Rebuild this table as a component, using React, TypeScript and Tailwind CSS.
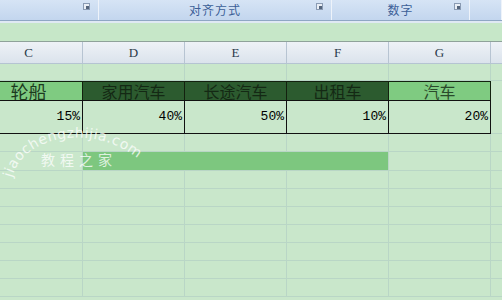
import React from 'react';

const cols = [108, 102, 102, 102, 102, 60];
const letters = ['C', 'D', 'E', 'F', 'G', ''];

const Launcher: React.FC = () => (
  <div className="w-[7px] h-[7px] border border-[#8a9bb3] bg-[#e9eef5] flex items-end justify-end">
    <div className="w-[3px] h-[3px] bg-[#55657c]" />
  </div>
);

const RibbonGroup: React.FC<{ w: string; label?: string; launcher?: boolean }> = ({ w, label, launcher }) => (
  <div className={`${w} h-full relative flex items-center justify-center border-r border-[#eef3fa] bg-gradient-to-b from-[#d6e4f5] to-[#c3d6ee]`}>
    {label && <span className="text-[12px] leading-none text-[#3c5f97] tracking-[1px]">{label}</span>}
    {launcher && (
      <div className="absolute right-[8px] top-[3px]">
        <Launcher />
      </div>
    )}
  </div>
);

const GridRow: React.FC<{ h: string; bar?: boolean }> = ({ h, bar }) => (
  <div className={`flex ${h} border-b border-[#b9d6c6]`}>
    {cols.map((w, i) => {
      const inBar = bar && i >= 1 && i <= 3;
      return (
        <div
          key={i}
          style={{ width: w }}
          className={`shrink-0 border-r ${inBar ? 'bg-[#7dc77f] border-[#7dc77f]' : 'border-[#b9d6c6]'} ${bar && i === 3 ? 'border-r-[#b9d6c6]' : ''}`}
        />
      );
    })}
  </div>
);

const App: React.FC = () => {
  const heads = [
    { t: '轮船', cls: 'bg-[#7fcb81] text-[#1c3a1e] text-[18px]' },
    { t: '家用汽车', cls: 'bg-[#2c5b2f] text-[#142914] text-[16px]' },
    { t: '长途汽车', cls: 'bg-[#2c5b2f] text-[#142914] text-[16px]' },
    { t: '出租车', cls: 'bg-[#2c5b2f] text-[#142914] text-[16px]' },
    { t: '汽车', cls: 'bg-[#7fcb81] text-[#2a4a2b] text-[16px]' },
  ];
  const vals = ['15%', '40%', '50%', '10%', '20%'];

  return (
    <div
      className="w-[502px] h-[300px] overflow-hidden relative bg-[#c9e7cb]"
      style={{ fontFamily: '"Noto Sans CJK SC", sans-serif' }}
    >
      {/* ribbon group labels */}
      <div className="flex h-[20px]">
        <RibbonGroup w="w-[99px]" launcher />
        <RibbonGroup w="w-[233px]" label="对齐方式" launcher />
        <RibbonGroup w="w-[138px]" label="数字" launcher />
        <RibbonGroup w="flex-1" />
      </div>
      <div className="h-[1px] bg-[#8ea7c4]" />
      <div className="h-[2px] bg-[#dfe9f3]" />
      {/* formula area */}
      <div className="h-[19px] bg-[#c6e7c8] border-b border-[#8fa29a]" />

      <div className="-ml-[25px]">
        {/* column header */}
        <div className="flex h-[22px] bg-gradient-to-b from-[#eef2f7] to-[#dbe3ec] border-b border-[#b5c4d2]">
          {cols.map((w, i) => (
            <div
              key={i}
              style={{ width: w, fontFamily: '"Liberation Serif", serif' }}
              className="shrink-0 border-r border-[#b7c4d2] flex items-center justify-center text-[13px] text-[#2a3a4a]"
            >
              {letters[i]}
            </div>
          ))}
        </div>

        <GridRow h="h-[17px]" />

        {/* table header */}
        <div className="flex h-[19px]">
          {heads.map((c, i) => (
            <div
              key={i}
              style={{ width: cols[i] }}
              className={`shrink-0 border-r border-t border-[#13210f] flex items-center justify-center leading-none ${c.cls}`}
            >
              {c.t}
            </div>
          ))}
          <div style={{ width: cols[5] }} className="shrink-0 border-r border-[#b9d6c6]" />
        </div>

        {/* data */}
        <div className="flex h-[34px]">
          {vals.map((v, i) => (
            <div
              key={i}
              style={{ width: cols[i], fontFamily: '"Liberation Mono", monospace' }}
              className="shrink-0 border-r border-b border-t border-[#111] flex items-center justify-end pr-[2px] text-[13px] text-black"
            >
              {v}
            </div>
          ))}
          <div style={{ width: cols[5] }} className="shrink-0 border-r border-b border-[#b9d6c6]" />
        </div>

        <GridRow h="h-[18px]" />
        <GridRow h="h-[19px]" bar />
        <GridRow h="h-[18px]" />
        <GridRow h="h-[18px]" />
        <GridRow h="h-[18px]" />
        <GridRow h="h-[18px]" />
        <GridRow h="h-[18px]" />
        <GridRow h="h-[18px]" />
        <GridRow h="h-[18px]" />
      </div>

      {/* watermark */}
      <svg className="absolute left-0 top-[114px]" width="180" height="84" viewBox="0 0 180 84">
        <defs>
          <path id="arc" d="M 12 64 C 24 14, 120 4, 160 70" />
        </defs>
        <text
          fill="#ffffff"
          fillOpacity="0.75"
          fontSize="14"
          fontFamily='"DejaVu Sans", sans-serif'
          letterSpacing="0.5"
        >
          <textPath href="#arc">jiaochengzhijia.com</textPath>
        </text>
      </svg>
      <div className="absolute left-[41px] top-[152px] text-[14px] leading-none tracking-[5px] text-white/75">
        教程之家
      </div>
    </div>
  );
};

export default App;
